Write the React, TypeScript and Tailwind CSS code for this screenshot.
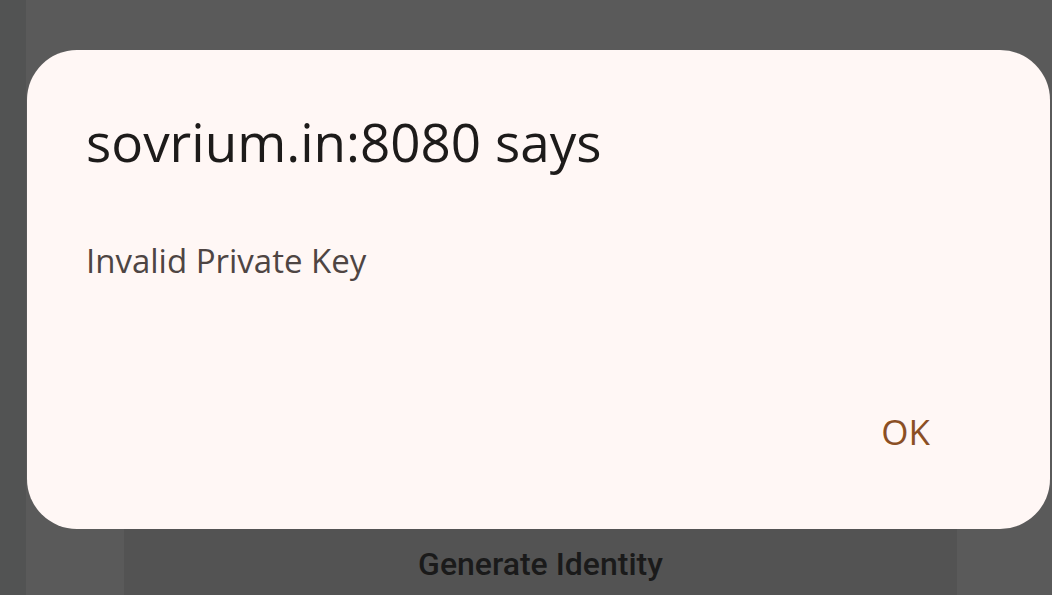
export default function App() {
  return (
    <div className="relative w-[1052px] h-[595px] overflow-hidden bg-[#5a5a5a] flex">
      <div className="w-[26px] h-full bg-[#525353] shrink-0" />
      <div className="flex-1 flex flex-col">
        <div className="h-[529px]" />
        <div className="ml-[98px] w-[833px] h-[66px] bg-[#535353] flex items-center justify-center pt-[4px]">
          <span className="text-[#1a1a1a] text-[32px] font-medium leading-none" style={{ fontFamily: "Roboto, sans-serif" }}>Generate Identity</span>
        </div>
      </div>
      <div className="absolute left-[27px] top-[50px] w-[1023px] h-[479px] bg-[#fff7f5] rounded-[50px] flex flex-col" style={{ fontFamily: "'Open Sans', sans-serif" }}>
        <div className="pl-[59px] pt-[60px] text-[#1d1b1a] text-[53px] leading-[64px]">sovrium.in:8080 says</div>
        <div className="pl-[59px] pt-[67px] text-[#4e4543] text-[33px] leading-[40px]">Invalid Private Key</div>
        <div className="flex-1" />
        <div className="flex justify-end pr-[120px] pb-[77px]">
          <span className="text-[#8b4f24] text-[35px] font-medium leading-[40px]">OK</span>
        </div>
      </div>
    </div>
  );
}
